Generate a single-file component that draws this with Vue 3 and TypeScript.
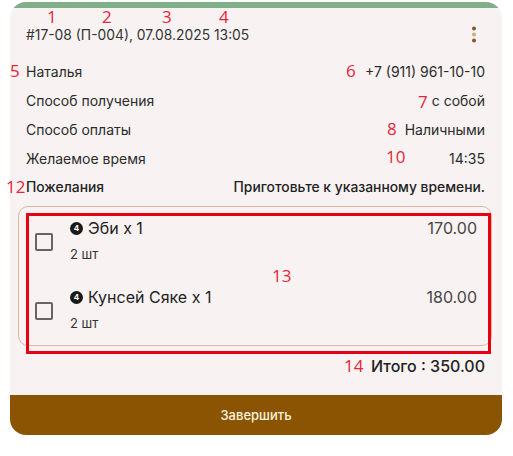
<script setup lang="ts">
interface Row { label: string; value: string; strong?: boolean }
const rows: Row[] = [
  { label: 'Наталья', value: '+7 (911) 961-10-10' },
  { label: 'Способ получения', value: 'с собой' },
  { label: 'Способ оплаты', value: 'Наличными' },
  { label: 'Желаемое время', value: '14:35' },
  { label: 'Пожелания', value: 'Приготовьте к указанному времени.', strong: true },
]
const items = [
  { name: 'Эби x 1', qty: '2 шт', price: '170.00' },
  { name: 'Кунсей Сяке x 1', qty: '2 шт', price: '180.00' },
]
const notes = [
  { t: '1', x: 47, y: 7 }, { t: '2', x: 102, y: 7 }, { t: '3', x: 162, y: 7 }, { t: '4', x: 219, y: 7 },
  { t: '5', x: 10, y: 61 }, { t: '6', x: 346, y: 61 }, { t: '7', x: 418, y: 92 }, { t: '8', x: 387, y: 119 },
  { t: '10', x: 386, y: 147 }, { t: '12', x: 6, y: 177 }, { t: '13', x: 272, y: 266 }, { t: '14', x: 344, y: 356 },
]
</script>

<template>
  <div class="page">
    <section class="card">
      <div class="stripe"></div>
      <div class="body">
        <header class="head">
          <span>#17-08 (П-004), 07.08.2025 13:05</span>
          <svg class="dots" width="6" height="18" viewBox="0 0 6 18" aria-hidden="true">
            <circle cx="3" cy="2.5" r="2" fill="#85592a" />
            <circle cx="3" cy="8.5" r="2" fill="#c9ad84" />
            <circle cx="3" cy="14.5" r="2" fill="#85592a" />
          </svg>
        </header>
        <div class="rows">
          <div v-for="r in rows" :key="r.label" class="row" :class="{ strong: r.strong }">
            <span>{{ r.label }}</span><span>{{ r.value }}</span>
          </div>
        </div>
        <div class="items">
          <div v-for="it in items" :key="it.name" class="item">
            <span class="check"></span>
            <div class="info">
              <div class="name"><span class="badge">4</span>{{ it.name }}</div>
              <div class="qty">{{ it.qty }}</div>
            </div>
            <span class="price">{{ it.price }}</span>
          </div>
        </div>
        <div class="total">Итого : 350.00</div>
      </div>
      <button class="finish" type="button">Завершить</button>
    </section>
    <div class="marker"></div>
    <span v-for="n in notes" :key="n.t" class="note" :style="{ left: n.x + 'px', top: n.y + 'px' }">{{ n.t }}</span>
  </div>
</template>

<style>
html, body { margin: 0; background: #fff; }
</style>

<style scoped>
.page {
  position: relative;
  width: 513px;
  height: 456px;
  padding: 2px 11px 0 10px;
  box-sizing: border-box;
  font-family: Inter, "Noto Sans", sans-serif;
  color: #222;
  overflow: hidden;
}
.card {
  height: 433px;
  background: #f8f3f2;
  border-radius: 16px;
  overflow: hidden;
  display: flex;
  flex-direction: column;
}
.stripe { height: 6px; background: #7fb08a; flex: none; }
.body { flex: 1; padding: 0 17px 0 16px; display: flex; flex-direction: column; }
.head {
  display: flex;
  justify-content: space-between;
  align-items: center;
  height: 24px;
  margin-top: 15px;
  font-size: 13.85px;
  color: #333;
  padding-right: 8px;
}
.rows { display: flex; flex-direction: column; margin-top: 10px; }
.row {
  display: flex;
  justify-content: space-between;
  height: 29px;
  line-height: 29px;
  font-size: 14px;
  color: #2b2b2b;
}
.row.strong { font-size: 13.85px; font-weight: 500; color: #222; }
.items {
  margin: 4px -7px 0 -8px;
  height: 140px;
  box-sizing: border-box;
  border: 1px solid #dcb79b;
  border-radius: 10px;
  padding: 8px 14px 0 16px;
  display: flex;
  flex-direction: column;
  gap: 10px;
}
.item { display: flex; align-items: flex-start; height: 59px; }
.check {
  width: 14px;
  height: 14px;
  border: 2px solid #666;
  border-radius: 2px;
  margin-top: 18px;
  margin-right: 17px;
  flex: none;
}
.info { flex: 1; }
.name {
  display: flex;
  align-items: center;
  font-size: 16px;
  line-height: 26px;
  color: #222;
}
.badge {
  width: 13px;
  height: 13px;
  border-radius: 50%;
  background: #1a1a1a;
  color: #fff;
  font-size: 8px;
  font-weight: 700;
  line-height: 13px;
  text-align: center;
  margin-right: 5px;
}
.qty { font-size: 13px; color: #333; line-height: 16px; margin-top: 5px; }
.price { font-size: 16px; line-height: 26px; color: #4a4444; }
.total {
  text-align: right;
  font-size: 16px;
  font-weight: 500;
  line-height: 20px;
  margin-top: 10px;
  color: #222;
}
.finish {
  flex: none;
  height: 40px;
  border: 0;
  background: #8a5402;
  color: #fff3df;
  font: 500 13px Inter, "Noto Sans", sans-serif;
}
.marker {
  position: absolute;
  left: 26px;
  top: 213px;
  width: 465px;
  height: 141px;
  box-sizing: border-box;
  border: 3px solid #e60012;
}
.note {
  position: absolute;
  font-family: "Open Sans", sans-serif;
  font-size: 17px;
  line-height: 20px;
  color: #e8243c;
}
</style>
